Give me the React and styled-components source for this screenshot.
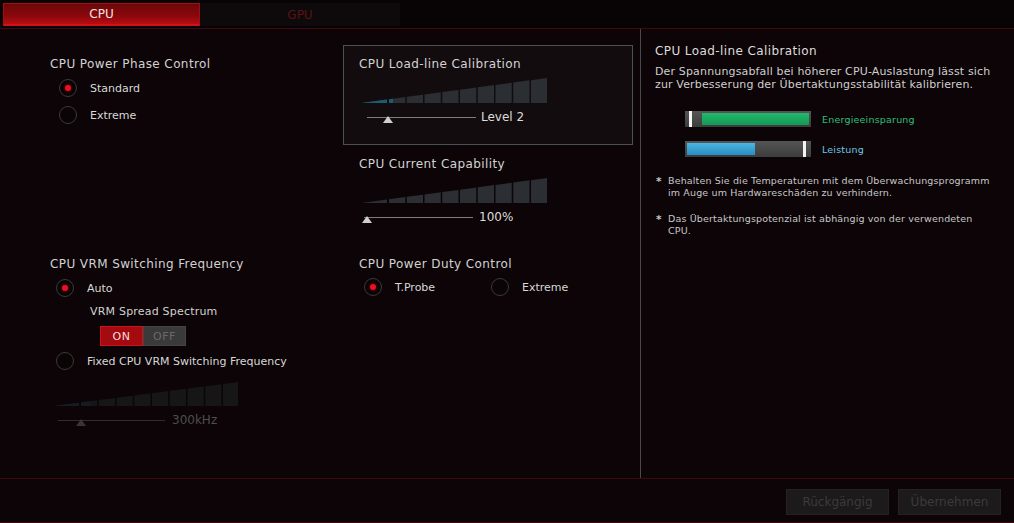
import React from "react";
import styled, { createGlobalStyle } from "styled-components";

const GlobalStyle = createGlobalStyle`
  html, body {
    margin: 0;
    padding: 0;
    background: #0c0406;
  }
  body {
    font-family: "DejaVu Sans", "Liberation Sans", sans-serif;
    color: #d4d4d4;
  }
`;

// staircase meter: a wedge then nine bars, top edge is one slanted line
const Stairs = ({ width = 184, height = 25, fill = 0, dim }) => {
  const segs = [[0, 24]];
  for (let i = 0; i < 9; i++) {
    const x0 = 26 + i * 17.75;
    segs.push([x0, Math.min(x0 + 16.25, width)]);
  }
  const h = x => (height * (x + 2)) / (width + 2);
  const poly = (a, b) =>
    `${a},${height} ${a},${height - h(a)} ${b},${height - h(b)} ${b},${height}`;
  const base = dim ? "#171617" : "#2b2e33";
  const blue = dim ? "#131c22" : "#1b5c74";
  return (
    <StairsSvg width={width} height={height} viewBox={`0 0 ${width} ${height}`}>
      {segs.map(([a, b], i) => (
        <polygon key={i} points={poly(a, b)} fill={base} />
      ))}
      {segs
        .filter(([a]) => a < fill)
        .map(([a, b], i) => (
          <polygon key={"f" + i} points={poly(a, Math.min(b, fill))} fill={blue} />
        ))}
    </StairsSvg>
  );
};

const Slider = ({ track, pos, label, gap, dim, indent }) => (
  <SliderRow $indent={indent}>
    <Track $w={track} $dim={dim}>
      <Thumb $dim={dim} style={{ left: pos - 5.5 }} />
    </Track>
    <SliderLabel $gap={gap} $dim={dim}>
      {label}
    </SliderLabel>
  </SliderRow>
);

const Radio = ({ checked, children, indent, width, top = 6 }) => (
  <RadioRow $indent={indent} $w={width} $top={top}>
    <Circle>{checked && <Dot />}</Circle>
    <RadioText>{children}</RadioText>
  </RadioRow>
);

const Bar = ({ fillFrom, fillTo, marker, color }) => (
  <BarTrack>
    <BarFill $c={color} style={{ left: fillFrom, width: fillTo - fillFrom }} />
    <BarMarker style={{ left: marker }} />
  </BarTrack>
);

export default function App() {
  return (
    <Page>
      <GlobalStyle />
      <TabBar>
        <Tab $active>CPU</Tab>
        <Tab>GPU</Tab>
      </TabBar>

      <Main>
        <Settings>
          <Column>
            <Block>
              <Title>CPU Power Phase Control</Title>
              <Radio checked indent={9}>Standard</Radio>
              <Radio indent={9} top={7}>Extreme</Radio>
            </Block>
            <Block>
              <Title>CPU VRM Switching Frequency</Title>
              <Radio checked indent={6}>Auto</Radio>
              <SubTitle>VRM Spread Spectrum</SubTitle>
              <Toggle>
                <ToggleHalf $on>ON</ToggleHalf>
                <ToggleHalf>OFF</ToggleHalf>
              </Toggle>
              <Radio indent={6} top={5}>Fixed CPU VRM Switching Frequency</Radio>
              <StairsWrap $indent={5} $top={11}>
                <Stairs width={183} height={24} fill={35} dim />
              </StairsWrap>
              <Slider track={107} pos={23} label="300kHz" gap={7} dim indent={8} />
            </Block>
          </Column>

          <Column>
            <Card $active>
              <Title>CPU Load-line Calibration</Title>
              <StairsWrap $indent={4} $top={6}>
                <Stairs fill={30} />
              </StairsWrap>
              <Slider track={109} pos={21} label="Level 2" gap={5} indent={8} />
            </Card>
            <Card>
              <Title>CPU Current Capability</Title>
              <StairsWrap $indent={4} $top={6}>
                <Stairs fill={0} />
              </StairsWrap>
              <Slider track={109} pos={3} label="100%" gap={6} indent={5} />
            </Card>
            <Block $pad={16}>
              <Title>CPU Power Duty Control</Title>
              <RadioGroup>
                <Radio checked width={127} top={5}>T.Probe</Radio>
                <Radio top={5}>Extreme</Radio>
              </RadioGroup>
            </Block>
          </Column>
        </Settings>

        <InfoPanel>
          <InfoTitle>CPU Load-line Calibration</InfoTitle>
          <InfoText>
            Der Spannungsabfall bei höherer CPU-Auslastung lässt sich zur
            Verbesserung der Übertaktungsstabilität kalibrieren.
          </InfoText>
          <Legend>
            <LegendRow>
              <Bar fillFrom={17} fillTo={124} marker={4} color="green" />
              <LegendLabel $c="#2cc07c">Energieeinsparung</LegendLabel>
            </LegendRow>
            <LegendRow>
              <Bar fillFrom={2} fillTo={70} marker={118} color="blue" />
              <LegendLabel $c="#6cc8e6">Leistung</LegendLabel>
            </LegendRow>
          </Legend>
          <Notes>
            <Note>
              <Star>*</Star>
              <span>
                Behalten Sie die Temperaturen mit dem Überwachungsprogramm im
                Auge um Hardwareschäden zu verhindern.
              </span>
            </Note>
            <Note>
              <Star>*</Star>
              <span>
                Das Übertaktungspotenzial ist abhängig von der verwendeten CPU.
              </span>
            </Note>
          </Notes>
        </InfoPanel>
      </Main>

      <Footer>
        <FooterButton disabled>Rückgängig</FooterButton>
        <FooterButton disabled>Übernehmen</FooterButton>
      </Footer>
    </Page>
  );
}

const Page = styled.div`
  width: 1014px;
  height: 523px;
  display: flex;
  flex-direction: column;
  background: #0c0406;
  overflow: hidden;
`;

const TabBar = styled.div`
  height: 29px;
  box-sizing: border-box;
  padding: 3px 0 0 3px;
  display: flex;
  align-items: flex-start;
  background: #080304;
  border-bottom: 1px solid #3e0a0f;
  flex-shrink: 0;
`;

const Tab = styled.div`
  width: ${p => (p.$active ? 197 : 200)}px;
  height: 23px;
  box-sizing: border-box;
  display: flex;
  align-items: center;
  justify-content: center;
  font-size: 12px;
  color: ${p => (p.$active ? "#f2e4e4" : "#5c1212")};
  background: ${p =>
    p.$active
      ? "linear-gradient(#6e0709, #8a080c 60%, #b80c12)"
      : "#0e0a0b"};
  border: ${p => (p.$active ? "1px solid #a50c12" : "none")};
  border-bottom: ${p => (p.$active ? "2px solid #d0121a" : "none")};
`;

const Main = styled.div`
  height: 449px;
  display: flex;
  flex-shrink: 0;
`;

const Settings = styled.div`
  width: 641px;
  box-sizing: border-box;
  border-right: 1px solid #4a4a4c;
  padding: 16px 0 0 50px;
  display: grid;
  grid-template-columns: 293px 290px;
  align-items: start;
`;

const Column = styled.div`
  display: flex;
  flex-direction: column;
`;

const Block = styled.div`
  height: 200px;
  box-sizing: border-box;
  padding: 11px 0 0 ${p => p.$pad || 0}px;
  display: flex;
  flex-direction: column;
`;

const Card = styled.div`
  height: 100px;
  box-sizing: border-box;
  padding: 10px 0 0 15px;
  border: 1px solid ${p => (p.$active ? "#4a5258" : "transparent")};
  background: ${p => (p.$active ? "#120c0e" : "transparent")};
  display: flex;
  flex-direction: column;
`;

const Title = styled.div`
  font-size: 12px;
  line-height: 16px;
  letter-spacing: 0.4px;
  color: #d2d2d2;
  white-space: nowrap;
`;

const SubTitle = styled.div`
  margin: 6px 0 0 40px;
  font-size: 11px;
  line-height: 16px;
  letter-spacing: 0.2px;
  color: #d2d2d2;
`;

const RadioGroup = styled.div`
  display: flex;
  padding-left: 5px;
`;

const RadioRow = styled.div`
  display: flex;
  align-items: center;
  height: 20px;
  margin-top: ${p => p.$top}px;
  padding-left: ${p => p.$indent || 0}px;
  width: ${p => (p.$w ? p.$w + "px" : "auto")};
  flex-shrink: 0;
`;

const Circle = styled.div`
  width: 18px;
  height: 18px;
  box-sizing: border-box;
  border-radius: 50%;
  border: 1.5px solid #3a3a3c;
  background: #0a0405;
  display: flex;
  align-items: center;
  justify-content: center;
  flex-shrink: 0;
`;

const Dot = styled.div`
  width: 6px;
  height: 6px;
  border-radius: 50%;
  background: #ee1020;
  box-shadow: 0 0 3px #a00010;
`;

const RadioText = styled.span`
  margin-left: 13px;
  font-size: 11px;
  color: #d8d8d8;
  white-space: nowrap;
`;

const Toggle = styled.div`
  display: flex;
  margin: 6px 0 0 50px;
  height: 20px;
`;

const ToggleHalf = styled.div`
  width: 43px;
  box-sizing: border-box;
  display: flex;
  align-items: center;
  justify-content: center;
  font-size: 11px;
  letter-spacing: 0.5px;
  color: ${p => (p.$on ? "#f4dede" : "#6a6a6a")};
  background: ${p => (p.$on ? "#a30b10" : "#3a3a3a")};
  border: 1px solid ${p => (p.$on ? "#c8141a" : "#444")};
`;

const StairsWrap = styled.div`
  margin: ${p => p.$top}px 0 0 ${p => p.$indent}px;
  line-height: 0;
`;

const StairsSvg = styled.svg`
  display: block;
`;

const SliderRow = styled.div`
  display: flex;
  align-items: center;
  height: 16px;
  margin: 6px 0 0 ${p => p.$indent || 0}px;
`;

const Track = styled.div`
  position: relative;
  width: ${p => p.$w}px;
  height: 1px;
  background: ${p => (p.$dim ? "#2e2e2e" : "#7c7c7c")};
`;

const Thumb = styled.div`
  position: absolute;
  top: -1px;
  width: 0;
  height: 0;
  border-left: 5.5px solid transparent;
  border-right: 5.5px solid transparent;
  border-bottom: 7px solid ${p => (p.$dim ? "#363636" : "#cfcfcf")};
`;

const SliderLabel = styled.span`
  margin-left: ${p => p.$gap}px;
  font-size: 12px;
  color: ${p => (p.$dim ? "#4e4e4e" : "#dcdcdc")};
  white-space: nowrap;
`;

const InfoPanel = styled.div`
  flex: 1;
  padding: 14px 8px 0 14px;
  display: flex;
  flex-direction: column;
`;

const InfoTitle = styled.div`
  font-size: 12px;
  line-height: 16px;
  letter-spacing: 0.4px;
  color: #dcdcdc;
`;

const InfoText = styled.div`
  margin-top: 6px;
  font-size: 11px;
  line-height: 13px;
  letter-spacing: 0.15px;
  color: #cfcfcf;
`;

const Legend = styled.div`
  margin: 20px 0 0 30px;
  display: flex;
  flex-direction: column;
  gap: 14px;
`;

const LegendRow = styled.div`
  display: flex;
  align-items: center;
`;

const BarTrack = styled.div`
  position: relative;
  width: 126px;
  height: 16px;
  background: linear-gradient(#555, #3c3c3c);
`;

const BarFill = styled.div`
  position: absolute;
  top: 2px;
  bottom: 2px;
  background: ${p =>
    p.$c === "green"
      ? "linear-gradient(#22b86c, #129a55)"
      : "linear-gradient(#4ab8e2, #2a8cc0)"};
`;

const BarMarker = styled.div`
  position: absolute;
  top: 0;
  bottom: 0;
  width: 3px;
  background: #f4f4f4;
`;

const LegendLabel = styled.span`
  margin-left: 11px;
  font-size: 9.5px;
  letter-spacing: 0.2px;
  color: ${p => p.$c};
`;

const Notes = styled.div`
  margin-top: 18px;
  display: flex;
  flex-direction: column;
  gap: 14px;
`;

const Note = styled.div`
  display: flex;
  font-size: 9.5px;
  line-height: 12px;
  letter-spacing: 0.15px;
  color: #c8c8c8;
  padding-right: 10px;
`;

const Star = styled.span`
  width: 12px;
  flex-shrink: 0;
  padding-left: 1px;
  font-weight: bold;
  font-size: 10.5px;
`;

const Footer = styled.div`
  flex: 1;
  box-sizing: border-box;
  border-top: 1px solid #3e0a0f;
  border-bottom: 1px solid #3e0a0f;
  padding: 10px 13px 0 0;
  display: flex;
  justify-content: flex-end;
  align-items: flex-start;
  gap: 9px;
`;

const FooterButton = styled.button`
  width: 103px;
  height: 26px;
  padding: 0;
  font-family: "DejaVu Sans", sans-serif;
  font-size: 12px;
  color: #3d3b3b;
  background: #1c1a1a;
  border: 1px solid #232121;
`;
